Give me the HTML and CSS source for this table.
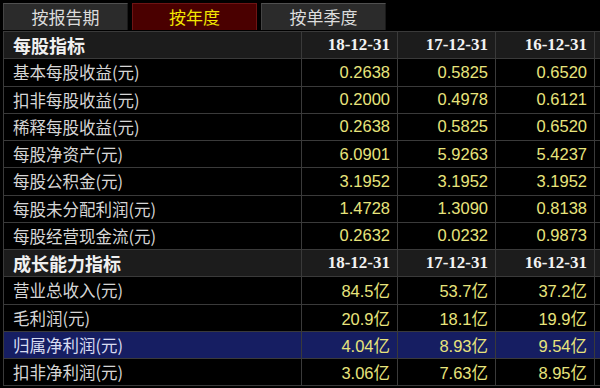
FILE: index.html
```html
<!DOCTYPE html>
<html lang="zh-CN">
<head>
<meta charset="utf-8">
<title>财务指标</title>
<link rel="stylesheet" href="styles.css">
</head>
<body>
<div class="page">
  <div class="tabs">
    <div class="tab">按报告期</div>
    <div class="tab active">按年度</div>
    <div class="tab">按单季度</div>
  </div>
  <div class="grid">
    <div class="c hd lbl">每股指标</div><div class="c hd date">18-12-31</div><div class="c hd date">17-12-31</div><div class="c hd date">16-12-31</div><div class="c hd"></div>

    <div class="c lbl">基本每股收益(元)</div><div class="c val">0.2638</div><div class="c val">0.5825</div><div class="c val">0.6520</div><div class="c"></div>
    <div class="c lbl">扣非每股收益(元)</div><div class="c val">0.2000</div><div class="c val">0.4978</div><div class="c val">0.6121</div><div class="c"></div>
    <div class="c lbl">稀释每股收益(元)</div><div class="c val">0.2638</div><div class="c val">0.5825</div><div class="c val">0.6520</div><div class="c"></div>
    <div class="c lbl">每股净资产(元)</div><div class="c val">6.0901</div><div class="c val">5.9263</div><div class="c val">5.4237</div><div class="c"></div>
    <div class="c lbl">每股公积金(元)</div><div class="c val">3.1952</div><div class="c val">3.1952</div><div class="c val">3.1952</div><div class="c"></div>
    <div class="c lbl">每股未分配利润(元)</div><div class="c val">1.4728</div><div class="c val">1.3090</div><div class="c val">0.8138</div><div class="c"></div>
    <div class="c lbl">每股经营现金流(元)</div><div class="c val">0.2632</div><div class="c val">0.0232</div><div class="c val">0.9873</div><div class="c"></div>

    <div class="c hd lbl">成长能力指标</div><div class="c hd date">18-12-31</div><div class="c hd date">17-12-31</div><div class="c hd date">16-12-31</div><div class="c hd"></div>

    <div class="c lbl">营业总收入(元)</div><div class="c val">84.5亿</div><div class="c val">53.7亿</div><div class="c val">37.2亿</div><div class="c"></div>
    <div class="c lbl">毛利润(元)</div><div class="c val">20.9亿</div><div class="c val">18.1亿</div><div class="c val">19.9亿</div><div class="c"></div>
    <div class="c sel lbl">归属净利润(元)</div><div class="c sel val">4.04亿</div><div class="c sel val">8.93亿</div><div class="c sel val">9.54亿</div><div class="c sel"></div>
    <div class="c lbl">扣非净利润(元)</div><div class="c val">3.06亿</div><div class="c val">7.63亿</div><div class="c val">8.95亿</div><div class="c"></div>
  </div>
</div>
</body>
</html>
```

FILE: styles.css
```css
html, body {
  margin: 0;
  padding: 0;
  background: #000;
  overflow: hidden;
}

.page {
  width: 600px;
  height: 388px;
  overflow: hidden;
  background: #000;
}

.tabs {
  display: flex;
  gap: 4px;
  padding: 3px 0 0 3px;
  height: 28px;
  box-sizing: border-box;
}

.tab {
  width: 125px;
  height: 27px;
  box-sizing: border-box;
  background: #2b2b2b;
  border-top: 1px solid #505050;
  border-left: 1px solid #454545;
  border-right: 1px solid #1a1a1a;
  color: #dcdcdc;
  font-family: "Noto Sans CJK SC", sans-serif;
  font-size: 17px;
  line-height: 25px;
  text-align: center;
}

.tab.active {
  background: #4a0000;
  border: 1px solid #6e1414;
  border-bottom: none;
  color: #f2e600;
}

.grid {
  margin-top: 3px;
  margin-left: 3px;
  width: 640px;
  display: grid;
  grid-template-columns: 297px 95px 97px 98px 60px;
  grid-auto-rows: 26.25px;
  gap: 1px;
  padding: 1px;
  background: #3a3a3a;
}

.c {
  background: #000;
  display: flex;
  align-items: center;
  overflow: hidden;
  white-space: nowrap;
}

.c.hd {
  background: #1c1c1c;
}

.c.sel {
  background: #161e62;
}

.lbl {
  padding-left: 9px;
  font-family: "Noto Sans CJK SC", sans-serif;
  font-size: 16.5px;
  color: #d6d6d6;
}

.hd.lbl {
  font-size: 18px;
  font-weight: bold;
  color: #f0f0f0;
}

.sel.lbl {
  color: #d8dcf2;
}

.val {
  justify-content: flex-end;
  padding-right: 7px;
  font-family: "Liberation Sans", "Noto Sans CJK SC", sans-serif;
  font-size: 16.5px;
  color: #e8e47c;
}

.date {
  justify-content: flex-end;
  padding-right: 7px;
  font-family: "Liberation Serif", "Noto Sans CJK SC", serif;
  font-weight: bold;
  font-size: 17px;
  color: #f2f2f2;
}
```
